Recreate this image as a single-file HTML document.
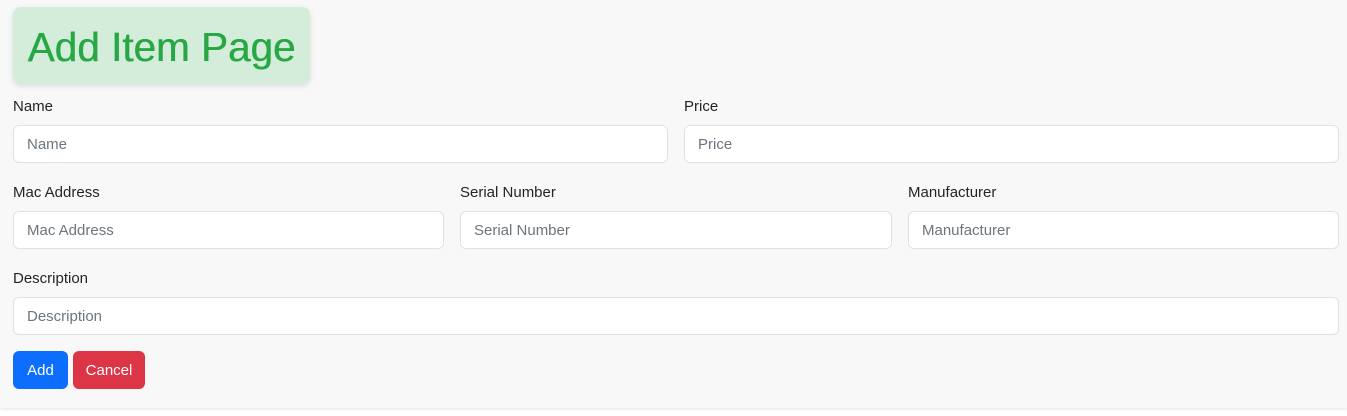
<!DOCTYPE html>
<html><head><style>
body{margin:0;width:1347px;height:416px;background:#fff;font-family:"Liberation Sans",sans-serif;position:relative;overflow:hidden}
.bg{position:absolute;left:0;top:0;width:1347px;height:408px;background:#f8f8f8;box-shadow:0 1px 3px rgba(0,0,0,.12)}
.title{position:absolute;left:13px;top:7px;width:297px;height:77px;background:#d4edda;border-radius:8px;box-shadow:0 2px 6px rgba(0,0,0,.12);color:#28a745;font-size:40.5px;line-height:80px;text-align:center;white-space:nowrap;text-shadow:0.5px 0 0 #28a745}
.l{position:absolute;font-size:15px;color:#212529}
.i{position:absolute;height:36px;background:#fff;border:1px solid #dee2e6;border-radius:6px;box-sizing:content-box;font-size:15px;color:#6c757d;line-height:38px;padding-left:13px}
.b{position:absolute;top:351px;height:38px;line-height:40px;color:#fff;font-size:15px;text-align:center;border-radius:6px}
</style></head><body>
<div class="bg"></div>
<div class="title">Add Item Page</div>
<div class="l" style="left:13px;top:98px">Name</div>
<div class="l" style="left:684px;top:98px">Price</div>
<div class="i" style="left:13px;top:125px;width:640px">Name</div>
<div class="i" style="left:684px;top:125px;width:640px">Price</div>
<div class="l" style="left:13px;top:184px">Mac Address</div>
<div class="l" style="left:460px;top:184px">Serial Number</div>
<div class="l" style="left:908px;top:184px">Manufacturer</div>
<div class="i" style="left:13px;top:211px;width:416px">Mac Address</div>
<div class="i" style="left:460px;top:211px;width:417px">Serial Number</div>
<div class="i" style="left:908px;top:211px;width:416px">Manufacturer</div>
<div class="l" style="left:13px;top:270px">Description</div>
<div class="i" style="left:13px;top:297px;width:1311px">Description</div>
<div class="b" style="left:13px;width:55px;background:#0d6efd">Add</div>
<div class="b" style="left:73px;width:72px;background:#dc3545">Cancel</div>
</body></html>
